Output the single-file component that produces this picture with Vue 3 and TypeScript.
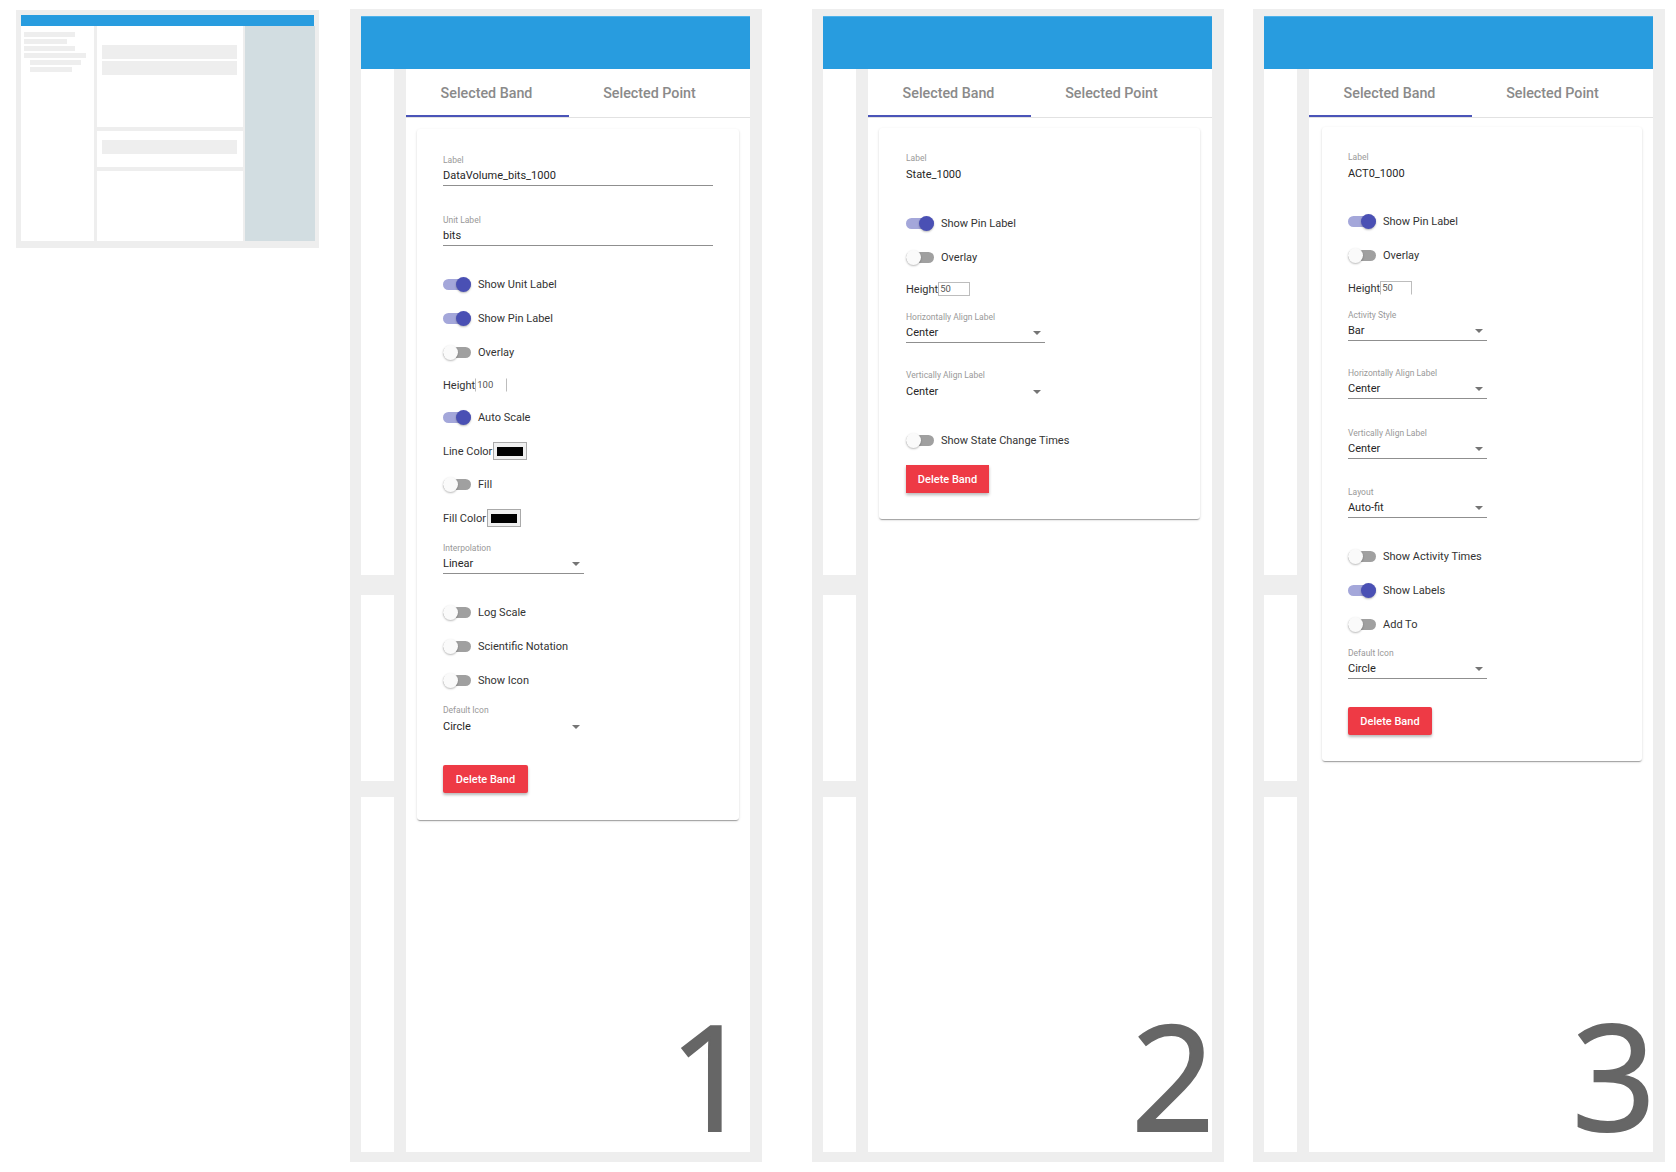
<script setup lang="ts">
type Row =
  | { kind: 'field'; gap: number; label: string; value: string; line?: boolean; select?: boolean }
  | { kind: 'toggle'; gap: number; label: string; on?: boolean }
  | { kind: 'height'; gap: number; value: string; edge: string }
  | { kind: 'color'; gap: number; label: string }
  | { kind: 'delete'; gap: number }

interface Panel {
  id: number
  rows: Row[]
}

const sidebarBars = [
  { id: 1, sub: false, width: 51 },
  { id: 2, sub: false, width: 43 },
  { id: 3, sub: false, width: 51 },
  { id: 4, sub: false, width: 62 },
  { id: 5, sub: true, width: 51 },
  { id: 6, sub: true, width: 42 },
]

const panels: Panel[] = [
  {
    id: 1,
    rows: [
      { kind: 'field', gap: 0, label: 'Label', value: 'DataVolume_bits_1000', line: true },
      { kind: 'field', gap: 28, label: 'Unit Label', value: 'bits', line: true },
      { kind: 'toggle', gap: 28, label: 'Show Unit Label', on: true },
      { kind: 'toggle', gap: 14, label: 'Show Pin Label', on: true },
      { kind: 'toggle', gap: 14, label: 'Overlay' },
      { kind: 'height', gap: 13, value: '100', edge: 'sides' },
      { kind: 'toggle', gap: 12, label: 'Auto Scale', on: true },
      { kind: 'color', gap: 14, label: 'Line Color' },
      { kind: 'toggle', gap: 13, label: 'Fill' },
      { kind: 'color', gap: 14, label: 'Fill Color' },
      { kind: 'field', gap: 14, label: 'Interpolation', value: 'Linear', line: true, select: true },
      { kind: 'toggle', gap: 28, label: 'Log Scale' },
      { kind: 'toggle', gap: 14, label: 'Scientific Notation' },
      { kind: 'toggle', gap: 14, label: 'Show Icon' },
      { kind: 'field', gap: 14, label: 'Default Icon', value: 'Circle', select: true },
      { kind: 'delete', gap: 29 },
    ],
  },
  {
    id: 2,
    rows: [
      { kind: 'field', gap: 0, label: 'Label', value: 'State_1000' },
      { kind: 'toggle', gap: 29, label: 'Show Pin Label', on: true },
      { kind: 'toggle', gap: 14, label: 'Overlay' },
      { kind: 'height', gap: 12, value: '50', edge: 'full' },
      { kind: 'field', gap: 12, label: 'Horizontally Align Label', value: 'Center', line: true, select: true },
      { kind: 'field', gap: 26, label: 'Vertically Align Label', value: 'Center', select: true },
      { kind: 'toggle', gap: 29, label: 'Show State Change Times' },
      { kind: 'delete', gap: 15 },
    ],
  },
  {
    id: 3,
    rows: [
      { kind: 'field', gap: 0, label: 'Label', value: 'ACT0_1000' },
      { kind: 'toggle', gap: 28, label: 'Show Pin Label', on: true },
      { kind: 'toggle', gap: 14, label: 'Overlay' },
      { kind: 'height', gap: 13, value: '50', edge: 'open' },
      { kind: 'field', gap: 11, label: 'Activity Style', value: 'Bar', line: true, select: true },
      { kind: 'field', gap: 26, label: 'Horizontally Align Label', value: 'Center', line: true, select: true },
      { kind: 'field', gap: 28, label: 'Vertically Align Label', value: 'Center', line: true, select: true },
      { kind: 'field', gap: 27, label: 'Layout', value: 'Auto-fit', line: true, select: true },
      { kind: 'toggle', gap: 28, label: 'Show Activity Times' },
      { kind: 'toggle', gap: 14, label: 'Show Labels', on: true },
      { kind: 'toggle', gap: 14, label: 'Add To' },
      { kind: 'field', gap: 13, label: 'Default Icon', value: 'Circle', line: true, select: true },
      { kind: 'delete', gap: 28 },
    ],
  },
]
</script>

<template>
  <div class="page">
    <div class="thumb">
      <div class="thumb__bar" />
      <div class="thumb__body">
        <div class="thumb__side">
          <div
            v-for="bar in sidebarBars"
            :key="bar.id"
            class="thumb__item"
            :class="{ 'thumb__item--sub': bar.sub }"
            :style="{ width: bar.width + 'px' }"
          />
        </div>
        <div class="thumb__center">
          <div class="thumb__block thumb__block--a">
            <div class="thumb__row" />
            <div class="thumb__row" />
          </div>
          <div class="thumb__block thumb__block--b">
            <div class="thumb__row" />
          </div>
          <div class="thumb__block thumb__block--c" />
        </div>
        <div class="thumb__right" />
      </div>
    </div>

    <div
      v-for="panel in panels"
      :key="panel.id"
      class="panel"
      :class="'panel--' + panel.id"
    >
      <div class="panel__header" />
      <div class="panel__body">
        <div class="rail">
          <div class="rail__a" />
          <div class="rail__b" />
          <div class="rail__c" />
        </div>
        <div class="main">
          <div class="tabs">
            <div class="tab tab--active">Selected Band</div>
            <div class="tab">Selected Point</div>
          </div>
          <div class="card">
            <template v-for="(row, i) in panel.rows" :key="i">
              <div
                v-if="row.kind === 'field'"
                class="field"
                :class="{ 'field--select': row.select, 'field--line': row.line }"
                :style="{ marginTop: row.gap + 'px' }"
              >
                <div class="field__label">{{ row.label }}</div>
                <div class="field__value">
                  <span>{{ row.value }}</span>
                  <i v-if="row.select" class="field__arrow" />
                </div>
              </div>

              <div
                v-else-if="row.kind === 'toggle'"
                class="row"
                :style="{ marginTop: row.gap + 'px' }"
              >
                <span class="toggle" :class="{ 'toggle--on': row.on }"><i /></span>
                <span class="row__text">{{ row.label }}</span>
              </div>

              <div
                v-else-if="row.kind === 'height'"
                class="row"
                :style="{ marginTop: row.gap + 'px' }"
              >
                <span class="row__plain">Height</span>
                <span class="num" :class="'num--' + row.edge">{{ row.value }}</span>
              </div>

              <div
                v-else-if="row.kind === 'color'"
                class="row"
                :style="{ marginTop: row.gap + 'px' }"
              >
                <span class="row__plain">{{ row.label }}</span>
                <span class="swatch"><i /></span>
              </div>

              <button
                v-else
                type="button"
                class="delete"
                :style="{ marginTop: row.gap + 'px' }"
              >
                Delete Band
              </button>
            </template>
          </div>
        </div>
      </div>
      <div class="panel__num">{{ panel.id }}</div>
    </div>
  </div>
</template>

<style>
html,
body {
  margin: 0;
  background: #fff;
}
</style>

<style scoped>
.page {
  display: flex;
  align-items: flex-start;
  width: 1676px;
  height: 1172px;
  padding: 9px 0 0 16px;
  box-sizing: border-box;
  font-family: Roboto, "Liberation Sans", sans-serif;
  background: #fff;
}

/* small overview picture */
.thumb {
  width: 303px;
  height: 238px;
  margin-top: 1px;
  padding: 5px 4px 7px 5px;
  box-sizing: border-box;
  background: #eee;
}

.thumb__bar {
  width: 293px;
  height: 11px;
  background: #289cdf;
}

.thumb__body {
  display: flex;
  height: 215px;
}

.thumb__side {
  width: 73px;
  padding: 6px 0 0 3px;
  box-sizing: border-box;
  background: #fff;
}

.thumb__item {
  height: 5px;
  margin-bottom: 2px;
  background: #eee;
}

.thumb__item--sub {
  margin-left: 6px;
}

.thumb__center {
  display: flex;
  flex-direction: column;
  gap: 4px;
  width: 146px;
  margin: 0 2px 0 3px;
}

.thumb__block {
  background: #fff;
}

.thumb__block--a {
  height: 101px;
  padding-top: 19px;
  box-sizing: border-box;
}

.thumb__block--b {
  height: 36px;
  padding-top: 9px;
  box-sizing: border-box;
}

.thumb__block--c {
  flex: 1;
}

.thumb__row {
  height: 14px;
  margin: 0 6px 2px 5px;
  background: #eee;
}

.thumb__right {
  width: 70px;
  background: #d2dde1;
}

/* the three numbered phones */
.panel {
  position: relative;
  display: flex;
  flex-direction: column;
  width: 412px;
  height: 1153px;
  padding: 7px 12px 10px 11px;
  box-sizing: border-box;
  background: #eee;
}

.panel--1 {
  margin-left: 31px;
}

.panel--2 {
  margin-left: 50px;
}

.panel--3 {
  margin-left: 29px;
}

.panel__header {
  flex-shrink: 0;
  height: 53px;
  box-sizing: border-box;
  border-top: 1px solid #4fb2ea;
  background: #289cdf;
}

.panel__body {
  flex: 1;
  min-height: 0;
  display: flex;
}

.rail {
  display: flex;
  flex-direction: column;
  width: 33px;
  margin-right: 12px;
}

.rail__a,
.rail__b,
.rail__c {
  background: #fff;
}

.rail__a {
  flex: 1;
}

.rail__b {
  height: 186px;
  margin-top: 20px;
}

.rail__c {
  height: 355px;
  margin-top: 16px;
}

.main {
  flex: 1;
  min-width: 0;
  background: #fff;
}

.tabs {
  display: flex;
  height: 49px;
  box-sizing: border-box;
  border-bottom: 1px solid #e2e2e2;
}

.tab {
  display: flex;
  align-items: center;
  justify-content: center;
  width: 163px;
  height: 48px;
  box-sizing: border-box;
  padding: 0 2px 1px 0;
  font-size: 14.3px;
  font-weight: 500;
  color: #8a8a8a;
}

.tab--active {
  box-shadow: inset 0 -2px 0 #4a54b8;
}

.card {
  display: flex;
  flex-direction: column;
  align-items: flex-start;
  width: 322px;
  margin: 11px 0 0 11px;
  padding: 25px 26px 27px;
  box-sizing: border-box;
  border-radius: 3px;
  background: #fff;
  box-shadow: 0 2px 1px -1px rgba(0, 0, 0, 0.2), 0 1px 1px 0 rgba(0, 0, 0, 0.14), 0 1px 3px 0 rgba(0, 0, 0, 0.12);
}

.panel--2 .card {
  width: 321px;
  margin-top: 10px;
  padding: 24px 27px 26px;
}

.panel--3 .card {
  width: 320px;
  margin: 9px 0 0 13px;
  padding: 24px 26px 26px;
}

.field {
  width: 100%;
  height: 32px;
}

.field--select {
  width: 141px;
}

.panel--2 .field--select,
.panel--3 .field--select {
  width: 139px;
}

.field__label {
  height: 12px;
  font-size: 8.5px;
  line-height: 12px;
  color: #999;
  white-space: nowrap;
}

.field__value {
  display: flex;
  align-items: center;
  justify-content: space-between;
  height: 20px;
  padding: 1px 4px 0 0;
  box-sizing: border-box;
  font-size: 11px;
  line-height: 18px;
  color: #262626;
}

.field--line .field__value {
  border-bottom: 1px solid #8f8f8f;
}

.field__arrow {
  width: 0;
  height: 0;
  border-left: 4px solid transparent;
  border-right: 4px solid transparent;
  border-top: 4px solid #757575;
}

.row {
  display: flex;
  align-items: center;
  height: 20px;
}

.row__text {
  margin-left: 7px;
  font-size: 11px;
  color: #333;
  white-space: nowrap;
}

.row__plain {
  font-size: 11px;
  color: #333;
  white-space: nowrap;
}

.toggle {
  position: relative;
  display: block;
  flex-shrink: 0;
  width: 28px;
  height: 11px;
  border-radius: 6px;
  background: #a0a0a0;
}

.toggle i {
  position: absolute;
  top: -2px;
  left: 0;
  width: 15px;
  height: 15px;
  border-radius: 50%;
  background: #fafafa;
  box-shadow: 0 1px 2px rgba(0, 0, 0, 0.28);
}

.toggle--on {
  background: #a4a7da;
}

.toggle--on i {
  left: 13px;
  background: #4a50b4;
}

.num {
  width: 32px;
  height: 14px;
  padding-left: 1px;
  box-sizing: border-box;
  border: 1px solid #bdbdbd;
  font-size: 9.5px;
  line-height: 12px;
  color: #555;
}

.num--sides {
  border-top-color: transparent;
  border-bottom-color: transparent;
}

.num--open {
  border-bottom-color: transparent;
}

.swatch {
  display: flex;
  align-items: center;
  justify-content: center;
  width: 34px;
  height: 18px;
  margin-left: 1px;
  box-sizing: border-box;
  border: 1px solid #aaa;
  background: #f0f0f0;
}

.swatch i {
  width: 26px;
  height: 9px;
  background: #000;
}

.delete {
  width: 85px;
  height: 28px;
  padding: 0;
  border: 0;
  border-radius: 2px;
  background: #ee3a45;
  box-shadow: 0 2px 3px rgba(0, 0, 0, 0.28);
  font-family: inherit;
  font-size: 11px;
  font-weight: 500;
  color: #fff;
}

.panel--2 .delete {
  width: 83px;
  border-radius: 0;
}

.panel--3 .delete {
  width: 84px;
}

.panel__num {
  position: absolute;
  right: 9px;
  bottom: 6px;
  font-family: "Open Sans", sans-serif;
  font-size: 147px;
  line-height: 1.1;
  color: #666;
  -webkit-text-stroke: 2px #666;
}
</style>
